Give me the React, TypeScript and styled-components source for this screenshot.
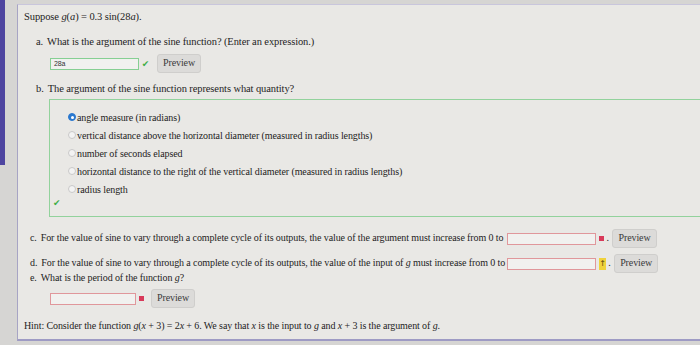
import React from 'react';
import styled, { createGlobalStyle } from 'styled-components';

const GlobalStyle = createGlobalStyle`
  html, body {
    margin: 0;
    padding: 0;
    background: #d6d5d3;
    width: 700px;
    height: 345px;
    overflow: hidden;
  }
  * { box-sizing: border-box; }
`;

const Page = styled.div`
  display: flex;
  width: 700px;
  height: 345px;
  font-family: 'Liberation Serif', 'Times New Roman', serif;
  color: #1e1d1d;
`;

const Rail = styled.div`
  width: 17px;
  flex-shrink: 0;
  display: flex;
  flex-direction: column;
`;

const RailAccent = styled.div`
  width: 5px;
  height: 165px;
  background: #4e45a0;
`;

const Panel = styled.div`
  flex: 1;
  margin-top: 4px;
  height: 337px;
  background: #e9e8e5;
  border-left: 1px solid #a7a4c4;
  border-top: 1px solid #c9c6dc;
  border-bottom: 2px solid #9e9bc4;
  padding: 4px 0 0 6px;
  font-size: 10px;
  letter-spacing: -0.1px;
`;

const Line = styled.div<{ $indent?: number; $top?: number; $size?: number }>`
  margin-left: ${p => p.$indent ?? 0}px;
  margin-top: ${p => p.$top ?? 0}px;
  font-size: ${p => p.$size ?? 10}px;
  line-height: 16px;
  white-space: nowrap;
`;

const Var = styled.i`
  font-style: italic;
`;

const Label = styled.span`
  margin-right: 4px;
`;

const AnswerInput = styled.span<{ $ok?: boolean; $w?: number; $gap?: number }>`
  display: inline-block;
  vertical-align: middle;
  width: ${p => p.$w ?? 89}px;
  height: 12px;
  margin-left: ${p => p.$gap ?? 4}px;
  background: #f1f1ef;
  border: 1px solid ${p => (p.$ok ? '#86cf93' : '#e0979b')};
  font-family: 'Liberation Sans', Arial, sans-serif;
  font-size: 7px;
  line-height: 10px;
  padding-left: 3px;
  color: #333;
`;

const Mark = styled.span<{ $kind: 'ok' | 'bad' | 'warn' }>`
  display: inline-flex;
  vertical-align: middle;
  align-items: center;
  justify-content: center;
  width: ${p => (p.$kind === 'warn' ? 7 : 5)}px;
  height: ${p => (p.$kind === 'warn' ? 12 : 5)}px;
  margin-left: ${p => (p.$kind === 'ok' ? 4 : 3)}px;
  background: ${p => (p.$kind === 'bad' ? '#d83a5a' : p.$kind === 'warn' ? '#f0d23a' : 'transparent')};
  color: ${p => (p.$kind === 'ok' ? '#3fae48' : '#5a4a10')};
  font-size: ${p => (p.$kind === 'ok' ? 9 : 8)}px;
  font-family: 'DejaVu Sans', sans-serif;
`;

const Dot = styled.span<{ $w?: number }>`
  display: inline-block;
  width: ${p => p.$w ?? 8}px;
  padding-left: 2px;
`;

const PreviewButton = styled.span`
  display: inline-block;
  vertical-align: middle;
  padding: 1px 5px 2px;
  line-height: 14px;
  background: #dcdbd9;
  border: 1px solid #cfcecc;
  border-radius: 3px;
  font-size: 10px;
  color: #3a3a3a;
`;

const ChoiceBox = styled.div`
  margin: 2px 0 0 25px;
  height: 118px;
  border: 1px solid #92d29c;
  border-right: none;
  padding: 8px 0 0 18px;
  position: relative;
`;

const Choice = styled.div`
  display: flex;
  align-items: center;
  height: 18px;
  gap: 1px;
  white-space: nowrap;
`;

const Radio = styled.span<{ $on?: boolean }>`
  width: 8px;
  height: 8px;
  border-radius: 50%;
  border: 1px solid ${p => (p.$on ? '#2a78cf' : '#c9c9c9')};
  background: ${p => (p.$on ? '#2a78cf' : '#f3f3f3')};
  display: inline-flex;
  align-items: center;
  justify-content: center;
  &::after {
    content: '';
    width: 3px;
    height: 3px;
    border-radius: 50%;
    background: ${p => (p.$on ? '#fff' : 'transparent')};
  }
`;

const BoxCheck = styled.span`
  position: absolute;
  left: 3px;
  bottom: 8px;
  color: #3fae48;
  font-size: 9px;
  font-family: 'DejaVu Sans', sans-serif;
`;

const choices = [
  'angle measure (in radians)',
  'vertical distance above the horizontal diameter (measured in radius lengths)',
  'number of seconds elapsed',
  'horizontal distance to the right of the vertical diameter (measured in radius lengths)',
  'radius length',
];

export default function App() {
  return (
    <Page>
      <GlobalStyle />
      <Rail>
        <RailAccent />
      </Rail>
      <Panel>
        <Line $size={10.5}>
          Suppose <Var>g</Var>(<Var>a</Var>) = 0.3 sin(28<Var>a</Var>).
        </Line>

        <Line $indent={12} $top={9} $size={10.5}>
          <Label>a.</Label>What is the argument of the sine function? (Enter an expression.)
        </Line>
        <Line $indent={26} $top={4}>
          <AnswerInput $ok $gap={0}>28a</AnswerInput>
          <Mark $kind="ok">✔</Mark>
          <Dot $w={9} />
          <PreviewButton>Preview</PreviewButton>
        </Line>

        <Line $indent={12} $top={8} $size={10.5}>
          <Label>b.</Label>The argument of the sine function represents what quantity?
        </Line>
        <ChoiceBox>
          {choices.map((c, i) => (
            <Choice key={c}>
              <Radio $on={i === 0} />
              {c}
            </Choice>
          ))}
          <BoxCheck>✔</BoxCheck>
        </ChoiceBox>

        <Line $indent={6} $top={12}>
          <Label>c.</Label>For the value of sine to vary through a complete cycle of its outputs, the value of the argument must increase from 0 to
          <AnswerInput />
          <Mark $kind="bad" />
          <Dot>.</Dot>
          <PreviewButton>Preview</PreviewButton>
        </Line>
        <Line $indent={6} $top={6}>
          <Label>d.</Label>For the value of sine to vary through a complete cycle of its outputs, the value of the input of <Var>g</Var> must increase from 0 to
          <AnswerInput $gap={2} />
          <Mark $kind="warn">↑</Mark>
          <Dot>.</Dot>
          <PreviewButton>Preview</PreviewButton>
        </Line>
        <Line $indent={6} $top={-3}>
          <Label>e.</Label>What is the period of the function <Var>g</Var>?
        </Line>
        <Line $indent={26} $top={3}>
          <AnswerInput $w={86} $gap={0} />
          <Mark $kind="bad" />
          <Dot $w={7} />
          <PreviewButton>Preview</PreviewButton>
        </Line>

        <Line $top={10}>
          Hint: Consider the function <Var>g</Var>(<Var>x</Var> + 3) = 2<Var>x</Var> + 6. We say that <Var>x</Var> is the input to <Var>g</Var> and <Var>x</Var> + 3 is the argument of <Var>g</Var>.
        </Line>
      </Panel>
    </Page>
  );
}
